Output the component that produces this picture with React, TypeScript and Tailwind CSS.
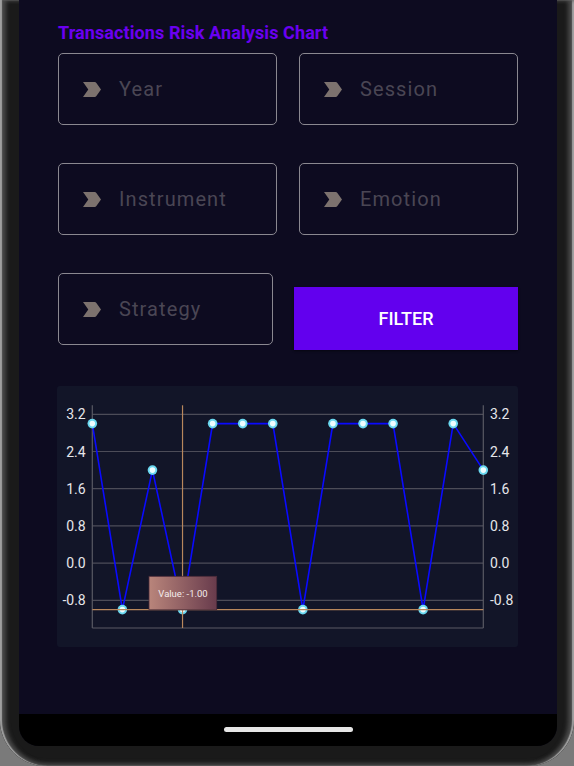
import React from "react";

const values = [3, -1, 2, -1, 3, 3, 3, -1, 3, 3, 3, -1, 3, 2];
const X0 = 35.3;
const X1 = 426.3;
const DX = (X1 - X0) / (values.length - 1);
const yOf = (v: number) => 28.3 + (3.2 - v) * 46.5;
const ticks = [3.2, 2.4, 1.6, 0.8, 0.0, -0.8];

function Chevron() {
  return (
    <svg width="18" height="15" viewBox="4 5 17 14" className="shrink-0">
      <path
        d="M4 18.99h11c.67 0 1.27-.32 1.63-.83L21 12l-4.37-6.16C16.27 5.33 15.67 5 15 5H4l5 7-5 6.99z"
        fill="#7c726e"
      />
    </svg>
  );
}

function Field({ label, w }: { label: string; w: string }) {
  return (
    <div
      className={`${w} h-[72px] border-[1.5px] border-[#8a8890] rounded-[5px] flex items-center pl-[24px]`}
    >
      <Chevron />
      <span className="ml-[18px] text-[20px] leading-none text-[#4a4654] tracking-[1.1px]">
        {label}
      </span>
    </div>
  );
}

function Chart() {
  const pts = values.map((v, i) => [X0 + i * DX, yOf(v)] as const);
  const poly = pts.map(([x, y]) => `${x},${y}`).join(" ");
  const cx = pts[3][0];
  const cy = pts[3][1];
  return (
    <div className="-ml-px w-[461px] h-[261px] bg-[#121528] rounded-[3px]">
      <svg width="461" height="261" viewBox="0 0 461 261">
        <defs>
          <linearGradient id="tip" x1="0" y1="0" x2="1" y2="0">
            <stop offset="0" stopColor="#b9857b" />
            <stop offset="1" stopColor="#683b4c" />
          </linearGradient>
        </defs>
        {ticks.map((t) => (
          <g key={t}>
            <line x1={X0} x2={X1} y1={yOf(t)} y2={yOf(t)} stroke="#4c4c58" strokeWidth="1.2" />
            <text
              x="28.7"
              y={yOf(t) + 5}
              textAnchor="end"
              fontSize="14"
              fill="#e6e6ea"
              fontFamily="Roboto, sans-serif"
            >
              {t.toFixed(1)}
            </text>
            <text
              x="433"
              y={yOf(t) + 5}
              textAnchor="start"
              fontSize="14"
              fill="#e6e6ea"
              fontFamily="Roboto, sans-serif"
            >
              {t.toFixed(1)}
            </text>
          </g>
        ))}
        <line x1={X0} x2={X0} y1="19.3" y2="242" stroke="#5a5a64" strokeWidth="1.2" />
        <line x1={X1} x2={X1} y1="19.3" y2="242" stroke="#5a5a64" strokeWidth="1.2" />
        <line x1={X0} x2={X1} y1="242" y2="242" stroke="#5a5a64" strokeWidth="1.2" />
        <polyline points={poly} fill="none" stroke="#0a0aff" strokeWidth="1.6" />
        {pts.map(([x, y], i) => (
          <g key={i}>
            <circle cx={x} cy={y} r="4.8" fill="#6ad8f0" />
            <circle cx={x} cy={y} r="2.8" fill="#effdff" />
          </g>
        ))}
        <line x1={cx} x2={cx} y1="19.3" y2="242" stroke="#b8875c" strokeWidth="1.2" />
        <line x1={X0} x2={X1} y1={cy} y2={cy} stroke="#b8875c" strokeWidth="1.2" />
        <rect x="92" y="190.3" width="67.7" height="33.5" fill="url(#tip)" stroke="#4a2c3a" strokeWidth="0.8" />
        <text
          x="126"
          y="210.5"
          textAnchor="middle"
          fontSize="9.5"
          fill="#f4ecec"
          fontFamily="Roboto, sans-serif"
        >
          Value: -1.00
        </text>
      </svg>
    </div>
  );
}

export default function App() {
  return (
    <div
      className="w-[574px] h-[766px] bg-[#7a7a7a] overflow-hidden"
      style={{ fontFamily: "Roboto, 'Noto Sans', sans-serif" }}
    >
      <div className="w-[574px] h-[766px] bg-[#1a1a1a] rounded-b-[46px] shadow-[inset_2px_0_1px_#a0a0a0,inset_6px_0_4px_#4a4a4a,inset_-2px_0_1px_#a0a0a0,inset_-6px_0_4px_#4a4a4a,inset_0_-3px_4px_#3a3a3a] pt-0">
        <div className="ml-[19px] w-[538px] h-[746px] rounded-b-[20px] overflow-hidden flex flex-col bg-[#0d0b20]">
          <div className="flex-1 pl-[39px] pt-[22px]">
            <div className="text-[18px] leading-[21px] font-bold text-[#6a00f0] tracking-[0.1px]">
              Transactions Risk Analysis Chart
            </div>
            <div className="mt-[10px] flex gap-[22px]">
              <Field label="Year" w="w-[219px]" />
              <Field label="Session" w="w-[219px]" />
            </div>
            <div className="mt-[38px] flex gap-[22px]">
              <Field label="Instrument" w="w-[219px]" />
              <Field label="Emotion" w="w-[219px]" />
            </div>
            <div className="mt-[38px] flex items-start">
              <Field label="Strategy" w="w-[215px]" />
              <button className="ml-[21px] mt-[14px] w-[224px] h-[63px] bg-[#6200ee] text-white text-[18px] font-medium flex items-center justify-center shadow-[0_1px_2px_rgba(0,0,0,0.5)]">
                FILTER
              </button>
            </div>
            <div className="mt-[36px]">
              <Chart />
            </div>
          </div>
          <div className="h-[32px] bg-black flex items-start justify-center">
            <div className="mt-[13px] w-[129px] h-[5px] rounded-full bg-[#e6e6e6]" />
          </div>
        </div>
      </div>
    </div>
  );
}
